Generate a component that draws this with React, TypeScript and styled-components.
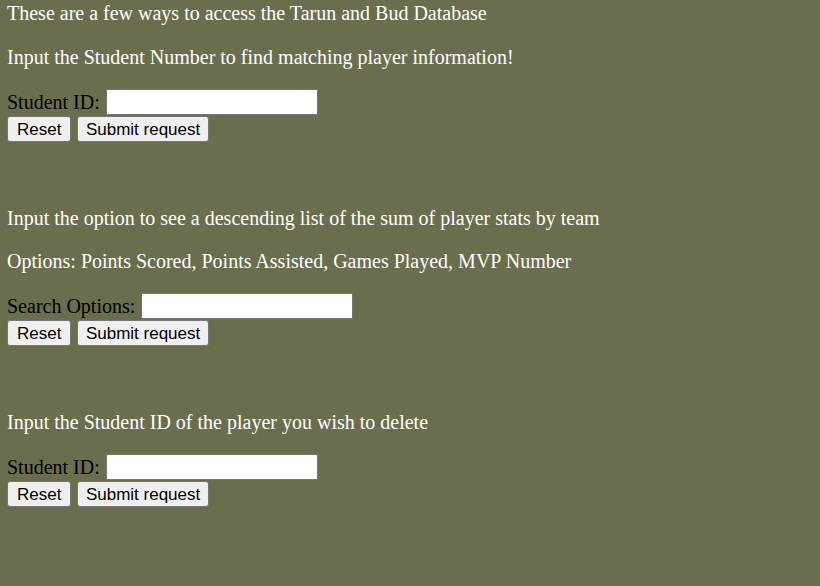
import React from "react";
import styled, { createGlobalStyle } from "styled-components";

const Global = createGlobalStyle`
  html, body { margin: 0; padding: 0; }
  body {
    background: #6b6e4e;
    font-family: "Liberation Serif", "Times New Roman", serif;
    font-size: 20px;
    min-height: 586px;
  }
`;

const Page = styled.div`
  padding: 0 7px;
  display: flex;
  flex-direction: column;
`;

const Intro = styled.div`
  color: #ffffff;
  line-height: 22px;
  margin-top: 2px;
`;

const Para = styled.p`
  color: #ffffff;
  margin: 21px 0 0;
  line-height: 22px;
`;

const Section = styled.section<{ $gap: number }>`
  display: flex;
  flex-direction: column;
  margin-top: ${(p) => p.$gap}px;
`;

const Form = styled.form`
  display: flex;
  flex-direction: column;
  margin-top: 21px;
`;

const FieldRow = styled.div`
  display: flex;
  align-items: center;
  gap: 6px;
  height: 26px;
`;

const Label = styled.label`
  color: #000000;
  line-height: 22px;
`;

const TextInput = styled.input`
  box-sizing: border-box;
  width: 212px;
  height: 26px;
  border: 1px solid #767676;
  border-radius: 0;
  background: #ffffff;
  padding: 1px 2px;
  font-family: "Liberation Sans", Arial, sans-serif;
  font-size: 16px;
`;

const ButtonRow = styled.div`
  display: flex;
  gap: 6px;
  margin-top: 1px;
`;

const Button = styled.button`
  box-sizing: border-box;
  height: 26px;
  padding: 0 7.5px;
  border: 1px solid #767676;
  border-radius: 3px;
  background: #efefef;
  color: #000000;
  font-family: "Liberation Sans", Arial, sans-serif;
  font-size: 17px;
  line-height: 1;
  cursor: pointer;
`;

const ResetButton = styled(Button)`
  padding: 0 9px;
`;

function RequestForm({ label, id }: { label: string; id: string }) {
  return (
    <Form onSubmit={(e) => e.preventDefault()}>
      <FieldRow>
        <Label htmlFor={id}>{label}</Label>
        <TextInput id={id} type="text" />
      </FieldRow>
      <ButtonRow>
        <ResetButton type="reset">Reset</ResetButton>
        <Button type="submit">Submit request</Button>
      </ButtonRow>
    </Form>
  );
}

export default function App() {
  return (
    <>
      <Global />
      <Page>
        <Intro>These are a few ways to access the Tarun and Bud Database</Intro>
        <Section $gap={1}>
          <Para>Input the Student Number to find matching player information!</Para>
          <RequestForm label="Student ID:" id="sid1" />
        </Section>
        <Section $gap={44}>
          <Para>Input the option to see a descending list of the sum of player stats by team</Para>
          <Para>Options: Points Scored, Points Assisted, Games Played, MVP Number</Para>
          <RequestForm label="Search Options:" id="opt" />
        </Section>
        <Section $gap={44}>
          <Para>Input the Student ID of the player you wish to delete</Para>
          <RequestForm label="Student ID:" id="sid2" />
        </Section>
      </Page>
    </>
  );
}
